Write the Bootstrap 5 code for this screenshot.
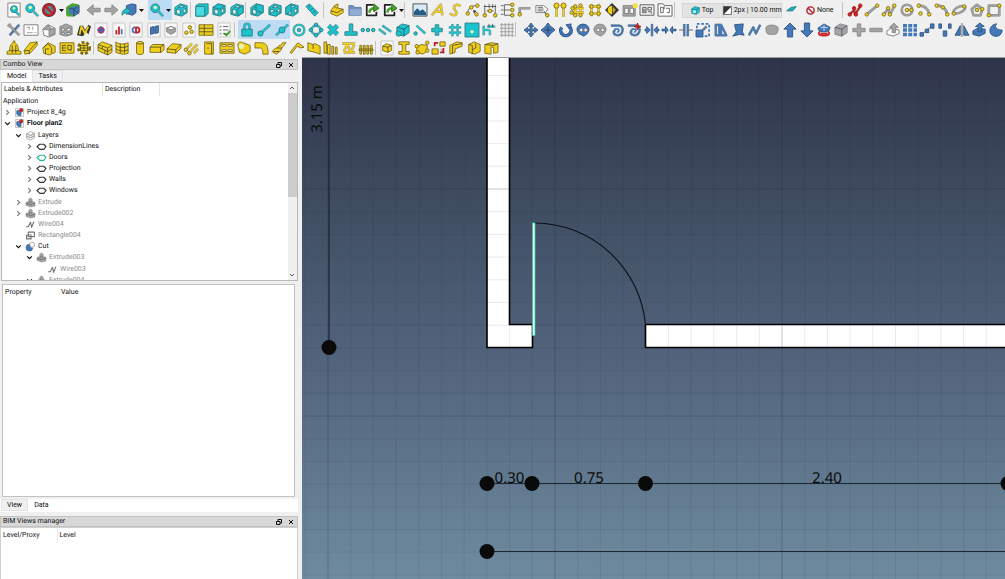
<!DOCTYPE html>
<html lang="en">
<head>
<meta charset="utf-8">
<meta name="viewport" content="width=device-width, initial-scale=1">
<title>FreeCAD - Floor plan2</title>
<link href="https://cdn.jsdelivr.net/npm/bootstrap@5.3.0/dist/css/bootstrap.min.css" rel="stylesheet">
<style>
  body { font-family: Roboto, "Open Sans", sans-serif; font-size: 7px; line-height: 11px; color: #111; background: #f0f0f0; text-rendering: geometricPrecision; }
  button { font: inherit; color: inherit; background: none; border: 0; padding: 0; }
  /* toolbars */
  .bar-row { height: 20px; }
  .bar-row:nth-child(2) { height: 19px; }
  .bar-row:nth-child(3) { height: 18px; }
  .tool-set > *, .bar-row > * { min-width: 0; }
  .tool { flex: 1 1 0; min-width: 0; height: 100%; display: flex; align-items: center; justify-content: center; }
  .tool:hover, .tool.active { background: #bcdcf4; }
  .split-line { border-left: 1px solid #c4c4c4; margin: 2px 0; width: 1px; }
  .wide { background: #e3e3e3; border: 1px solid #d6d6d6; height: 15px; white-space: nowrap; }
  .tool-gap { gap: 2px; }
  .ico { width: 14px; height: 14px; flex: none; overflow: visible; stroke-linejoin: round; }
  .ico-s { width: 9px; height: 9px; flex: none; stroke-linejoin: round; overflow: visible; }
  .ft { fill: #1cc3cd; stroke: #2a7d84; } .fy { fill: #efcf1c; stroke: #7d6a17; }
  .fb { fill: #4379b8; stroke: #2f5484; } .fg { fill: #a4a4a4; stroke: #858585; }
  .fw { fill: #fbfbfb; stroke: #777; } .fr { fill: #dc2020; stroke: #9c1a1a; }
  .fk { fill: #333; } .fd { fill: #e8f7b8; }
  .edge, .lt, .ly, .lb, .lg, .lk, .lr, .lgreen { fill: none; }
  .edge { stroke: #333; stroke-width: 3; opacity: .5; }
  .lt { stroke: #1cc3cd; stroke-width: 2; } .ly { stroke: #efcf1c; stroke-width: 2; }
  .lb { stroke: #4379b8; stroke-width: 2; } .lg { stroke: #a0a0a0; stroke-width: 2; }
  .lk { stroke: #333; stroke-width: 1; stroke-opacity: .8; } .lr { stroke: #c81c24; stroke-width: 2; }
  .lgreen { stroke: #4aa52c; stroke-width: 3; }
  /* docked panels */
  .dock { flex: 0 0 30%; min-width: 0; padding: 2px 4px 0 0; }
  .dock-title { background: #d8d8d8; border: 1px solid #c2c2c2; height: 11px; line-height: 9px; padding: 0 2px; }
  .dock-title h2 { font-size: 7px; line-height: 9px; font-weight: 400; margin: 0; }
  .dock-title button { width: 8px; height: 9px; display: flex; align-items: center; justify-content: center; }
  .dock-title svg { width: 6px; height: 6px; }
  .dock-title .lk { stroke: #111; stroke-opacity: 1; }
  .dock-tabs { border: 0; padding-left: 1px; --bs-nav-tabs-border-width: 0; flex-wrap: nowrap; }
  .dock-tabs .nav-link { font-size: 7px; line-height: 10px; padding: 0 5px; color: #111; border: 1px solid #e4e4e4; border-radius: 0; margin: 0; background: #f0f0f0; }
  .dock-tabs .nav-link.active { background: #fff; color: #111; border-color: #fff; }
  .low-tabs { margin-top: 2px; padding-bottom: 1px; }
  .tree-box { height: 199px; border: 1px solid #b8b8b8; background: #fff; margin: 0 0 0 1px; }
  .tree-head { height: 13px; line-height: 13px; }
  .tree-head span { padding-left: 2px; border-right: 1px solid #e4e4e4; }
  .tree-head span:nth-child(1) { width: 101px; } .tree-head span:nth-child(2) { width: 57px; }
  .tree { height: 190px; margin: 0; padding: 0; list-style: none; }
  .tree li { flex: 1 1 0; min-height: 0; display: flex; align-items: center; white-space: nowrap; }
  .tree .fold { width: 9px; height: 9px; display: flex; align-items: center; justify-content: center; margin-right: 3px; }
  .tree .fold svg { width: 7px; height: 7px; }
  .tree .ico-s { margin-right: 3px; }
  .lv0 { padding-left: 1px; } .lv1 { padding-left: 12px; } .lv2 { padding-left: 23px; } .lv3 { padding-left: 34px; }
  .dim { color: #8b8b8b; }
  .scroll-bar { width: 9px; background: #f0f0f0; }
  .scroll-bar svg { width: 6px; height: 10px; margin: 0 auto; }
  .thumb { height: 104px; background: #cdcdcd; }
  .prop-box { background: #fff; border: 1px solid #c2c2c2; margin: 3px 3px 0 2px; }
  .head-tbl { border-collapse: collapse; }
  .head-tbl th { font-weight: 400; height: 15px; padding: 0 2px; }
  .prop-box th:first-child { width: 56px; }
  .views-box { background: #fff; border: 1px solid #d0d0d0; border-bottom: 0; height: 52px; }
  .views-box th:first-child { width: 56px; border-right: 1px solid #e8e8e8; }
  /* 3D view */
  .view3d { min-width: 0; background: linear-gradient(#2e3449 0%, #455569 37%, #50617a 55%, #5d7389 75%, #6e8ba0 100%); border-top: 1px solid #9a9a9a; }
  .view3d text { font-family: "Noto Sans", "Open Sans", sans-serif; font-size: 15px; fill: #0a0a0a; text-anchor: middle; }
</style>
</head>
<body class="vh-100 d-flex flex-column overflow-hidden">
<header id="bars">
  <div class="bar-row d-flex align-items-center" role="toolbar" aria-label="View"></div>
  <div class="bar-row d-flex align-items-center" role="toolbar" aria-label="Snap and modify"></div>
  <div class="bar-row d-flex align-items-center" role="toolbar" aria-label="Building"></div>
</header>

<main class="d-flex flex-grow-1 overflow-hidden">
  <aside class="dock d-flex flex-column">
    <section class="d-flex flex-column flex-grow-1">
      <div class="dock-title d-flex align-items-center">
        <h2 class="flex-grow-1">Combo View</h2>
        <div class="d-flex gap-1">
          <button aria-label="Float"><svg viewBox="0 0 6 6"><path class="lk" d="M2 2V.5h3.5V4H4M.5 2.5H4v3H.5z"/></svg></button>
          <button aria-label="Close"><svg viewBox="0 0 6 6"><path class="lk" d="M1 1l4 4M5 1L1 5"/></svg></button>
        </div>
      </div>
      <div class="nav nav-tabs dock-tabs" role="tablist">
        <button class="nav-link active" role="tab">Model</button>
        <button class="nav-link" role="tab">Tasks</button>
      </div>
      <div class="tree-box d-flex">
        <div class="flex-grow-1 overflow-hidden">
          <div class="tree-head d-flex"><span>Labels &amp; Attributes</span><span>Description</span></div>
          <ul class="tree d-flex flex-column" id="tree"></ul>
        </div>
        <div class="scroll-bar d-flex flex-column">
          <svg viewBox="0 0 6 10"><path class="lk" d="M1 6l2-2 2 2"/></svg>
          <div class="thumb"></div>
          <svg class="mt-auto" viewBox="0 0 6 10"><path class="lk" d="M1 4l2 2 2-2"/></svg>
        </div>
      </div>
      <div class="prop-box flex-grow-1">
        <table class="head-tbl"><thead><tr><th>Property</th><th>Value</th></tr></thead></table>
      </div>
      <div class="bg-white low-tabs">
        <div class="nav nav-tabs dock-tabs" role="tablist">
          <button class="nav-link" role="tab">View</button>
          <button class="nav-link active" role="tab">Data</button>
        </div>
      </div>
    </section>
    <section class="mt-1">
      <div class="dock-title d-flex align-items-center">
        <h2 class="flex-grow-1">BIM Views manager</h2>
        <div class="d-flex gap-1">
          <button aria-label="Float"><svg viewBox="0 0 6 6"><path class="lk" d="M2 2V.5h3.5V4H4M.5 2.5H4v3H.5z"/></svg></button>
          <button aria-label="Close"><svg viewBox="0 0 6 6"><path class="lk" d="M1 1l4 4M5 1L1 5"/></svg></button>
        </div>
      </div>
      <div class="views-box">
        <table class="head-tbl"><thead><tr><th>Level/Proxy</th><th>Level</th></tr></thead></table>
      </div>
    </section>
  </aside>

  <section class="view3d flex-grow-1 overflow-hidden" aria-label="3D view">
    <svg class="d-block w-100 h-100" id="plan">
      <line x1="27" x2="27" y1="0" y2="290" stroke="#1c2231" stroke-opacity=".8" stroke-width="1.5"/>
      <g fill="#fff" stroke="#000" stroke-width="1.6">
        <path d="M185-5V289.500H230.500V266.500H207.500V-5z"/>
        <path d="M3000 266.500H343.500V289.500H3000z"/>
      </g>
      <g id="grid"></g>
      <path d="M233 165A112 112 0 0 1 343.500 267" fill="none" stroke="#0d1017" stroke-width="1.1"/>
      <rect x="230.500" y="165" width="2.500" height="112.500" fill="#e9fffa" stroke="#2fc5a4" stroke-width=".8"/>
      <path d="M185 425.500H703M185 493.500H3000" stroke="#1b2731" stroke-width="1.1"/>
      <g fill="#0a0a0a">
        <circle cx="27" cy="289.500" r="7.500"/><circle cx="185" cy="425.500" r="7.500"/><circle cx="230" cy="425.500" r="7.500"/>
        <circle cx="343.500" cy="425.500" r="7.500"/><circle cx="706" cy="425.500" r="7.500"/><circle cx="185" cy="493.500" r="7.500"/>
      </g>
      <text x="207.500" y="425">0.30</text>
      <text x="287" y="425">0.75</text>
      <text x="525" y="425">2.40</text>
      <text transform="translate(20 51) rotate(-90)">3.15 m</text>
    </svg>
  </section>
</main>

<script src="https://cdn.jsdelivr.net/npm/bootstrap@5.3.0/dist/js/bootstrap.bundle.min.js"></script>
<script>
const p = (c, d) => `<path class="${c}" d="${d}"/>`;
const o = (c, x, y, r) => `<circle class="${c}" cx="${x}" cy="${y}" r="${r}"/>`;
const s = (c, d) => p('edge', d) + p(c, d);          // outlined stroke
const dots = (c, ...a) => a.map(([x, y]) => o(c, x, y, 2)).join('');
const cube = c => p(c, 'M1 5l6-4 8 2v8l-6 4-8-2z') + `<path d="M1 5l8 2 6-4M9 7v8" fill="none" stroke="#123" stroke-opacity=".6"/>`;
const wire = f => p('ft', 'M1 5l6-4 8 2v8l-6 4-8-2z') + `<path fill="#e6f7f7" stroke="#2a7d84" d="M3 7l4 1v5l-4-1zM10.500 8l3-2v4l-3 2zM5 5l3-2 4 1-3 1.500z"/>` + (f ? p('ft', f) : '');
const sheet = x => `<path fill="#f8f8f8" stroke="#c4c4c4" d="M1 0h14v16H1z"/>` + x;
const frame = x => `<path fill="#eee" stroke="#555" d="M0 2h16v12H0z"/>` + x;
const glass = c => s('lt', 'M10 10l5 5') + o(c, 6, 6, 5) + o('fd', 6, 5, 2);

const icons = {
  fitAll: `<path fill="#fff" stroke="#777" d="M1 0h14v16H1z"/>` + s('lt', 'M10 10l4 4') + o('ft', 8, 7, 4) + o('fd', 8, 6, 1.5),
  fitSel: glass('ft'),
  noDraw: `<circle cx="8" cy="8" r="7" fill="#4b8f94" stroke="#3a3a3a" stroke-width="2"/>` + `<circle cx="8" cy="8" r="6" fill="none" stroke="#c81c24" stroke-width="2.500"/><path d="M4 4l8 8" stroke="#c81c24" stroke-width="2.500"/>`,
  boxSel: cube('fb') + p('lgreen', 'M2 5v9h6M2 5l6-3 6 1') + p('lk', 'M10 8l5 5'),
  back: p('fg', 'M0 8l7-6v4h8v4H7v4z'), fwd: p('fg', 'M16 8L9 2v4H1v4h8v4z'),
  link: p('fb', 'M5 3l6-2 5 1v9l-4 3-7-2z') + p('ft', 'M0 14c0-5 2-7 5-7V5l5 4-5 4v-2c-2 0-3 1-5 3z'),
  glass: glass('ft'), axo: wire(''), front: wire('M1 5l8 2v8l-8-2z'),
  front2: `<path class="ft" d="M1 3l3-2h11v11l-3 3H1z"/><path fill="#4adbe2" stroke="#2a7d84" d="M1 4h10v11H1z"/>`,
  top: wire('M1 5l6-4 8 2-6 4z'), right: wire('M9 7l6-4v8l-6 4z'),
  rear: wire('M7 1l8 2v8l-8-2z'), bottom: wire('M1 13l6-4 8 2-6 4z'), left: wire('M1 5l6-4v8l-6 4z'),
  ruler: p('ft', 'M1 4l4-3 10 10-4 4z') + p('lk', 'M6 3L4 5M9 6L7 8M12 9l-2 2'),
  part: p('fy', 'M1 9l4-6 4-2v5l6 1v4l-7 4-7-3z') + p('lk', 'M1 9l7 2 7-4M5 4l3 2'),
  folder: `<path fill="#6f8fbd" stroke="#58749c" d="M1 3h5l2 2h7v9H1z"/><path fill="#8facd2" d="M2 7h13v7H2z"/>`,
  linkOut: `<path fill="#fff" stroke="#222" stroke-width="2" d="M9 2H2v12h11v-4"/>` + p('lgreen', 'M5 11c0-4 2-5 6-5') + `<path fill="#4aa52c" stroke="#265f12" d="M10 1l6 5-6 4z"/>`,
  image: `<path fill="#d8eaf5" stroke="#444" d="M0 1h16v14H0z"/><path fill="#285d85" d="M1 10l4-4 3 3 3-2 4 4v3H1z"/>`,
  textA: s('ly', 'M1 14L11 2l2 12M5 10h7'), textS: s('ly', 'M14 4C11 0 4 3 8 8s0 8-6 4'),
  dimA: p('lk', 'M2 12C2 6 6 3 12 3') + dots('fy', [2, 12], [6, 5], [13, 3], [12, 13]) + p('fk', 'M8 8l4 1-3 3z'),
  dimB: p('lk', 'M1 4h14M2 2v12M14 2v12M4 9h8M7 1v5M11 1v5') + dots('fy', [2, 14], [14, 14], [8, 9]),
  dimC: p('lk', 'M5 2v12M5 2h8M5 8h8M5 14h8M1 3h3M1 8h3M1 13h3') + dots('fy', [14, 2], [14, 8], [14, 14]),
  leader: s('lg', 'M2 13V6h12') + dots('fy', [2, 13]),
  tag: p('fw', 'M1 3h9l5 4-3 4H1z') + p('lk', 'M3 5h6M3 7h7M3 9h6M10 9l4 6') + dots('fy', [14, 14]),
  axis: s('ly', 'M4 5v11M12 5v11') + `<circle class="fy" cx="4" cy="3" r="3"/><circle class="fy" cx="12" cy="3" r="3"/>`,
  axes: s('ly', 'M2 6h14M2 11h14M6 2v13M12 1v14') + dots('fy', [2, 11], [6, 4], [12, 3], [3, 6], [6, 14], [12, 14]),
  grid: s('ly', 'M1 4h14M1 12h14M4 1v14M12 1v14') + dots('fy', [4, 4], [12, 4], [4, 12], [12, 12]),
  section: p('fk', 'M8 0l8 8-8 8-8-8z') + `<path fill="#efcf1c" d="M8 3v10a5 5 0 0 1 0-10z"/>` + p('fy', 'M9 4l3 4-3 4z'),
  pageNew: p('fg', 'M0 3h14v12H0z') + p('fw', 'M2 6h4v6H2zM8 6h4v6H8z') + `<circle cx="14" cy="3" r="3" fill="#f4e04a"/>`,
  pageA: frame(p('lk', 'M3 5h4v6H3zM9 5h4v3H9zM9 10h4v2') + p('fg', 'M4 7h2v3H4z')), pageB: `<path fill="#fff" stroke="#555" d="M0 1h6l2 2h8v12H0z"/>` + p('lk', 'M3 5h3v6H3zM9 6h4v5h-3M7 3v4'),
  plane: `<path fill="#1cb0ba" stroke="#2a7d84" d="M3 9l5-4 6-1-4 5z"/>`,
  topv: cube('ft') + `<path fill="#e6ffff" d="M4 8h5v4H4z"/>`, bw: `<path fill="#fff" stroke="#111" d="M1 1h14v14H1z"/>` + p('fk', 'M1 1h14L1 15z'),
  none: `<circle cx="8" cy="8" r="6.500" fill="#fff" stroke="#b01c22" stroke-width="2.500"/><path d="M4 4l8 8" stroke="#b01c22" stroke-width="2.500"/>`,
  sketch: s('lr', 'M2 13l5-5 1 5 6-9') + dots('fr', [2, 13], [7, 6], [9, 13], [14, 3]),
  line: s('lg', 'M2 13L14 3') + dots('fy', [2, 13], [14, 3]),
  poly: s('lg', 'M2 13l5-6 2 6 5-9') + dots('fy', [2, 13], [7, 6], [9, 13], [14, 3]),
  circle: `<circle class="edge" cx="8" cy="8" r="6"/><circle class="lg" cx="8" cy="8" r="6"/>` + dots('fy', [8, 8], [13, 8]),
  arc: s('lg', 'M2 3c7 0 11 4 12 10') + dots('fy', [2, 3], [14, 13], [4, 12]),
  arc3: s('lg', 'M2 3c7 0 11 4 12 10') + dots('fy', [2, 3], [9, 5], [14, 13]),
  ellipse: s('lg', 'M2 12C0 7 10 2 14 4s-4 9-12 8z') + dots('fy', [2, 12], [14, 4]),
  polygon: s('lg', 'M8 2l6 5-2 7H4L2 7z') + dots('fy', [8, 8], [14, 7]),
  rect: s('lg', 'M2 3h12v11H2z') + dots('fy', [14, 3], [2, 14]),
  tools: s('lb', 'M3 14L14 2') + s('lg', 'M2 2l12 12M1 4l3-3'),
  setup: `<path fill="#fff" stroke="#777" d="M0 2h16v12H0z"/><path d="M3 5h3M10 4v4M3 11h7M12 11h2M6 4v4" stroke="#999" fill="none"/>`,
  house: p('fw', 'M1 7l6-5 8 4v7l-7 3-6-2z') + p('fg', 'M1 7l6-5 4 5-3 1zM8 8l6-2v7l-6 2z'),
  bldg: p('fg', 'M1 4l7-3 7 3v9l-7 2-7-2z') + p('fw', 'M3 6h3v3H3zM9 6h4v3H9zM3 11h3v2H3zM9 11h4v2H9z'),
  site: p('fk', 'M0 14L3 3h4l2 5 4-6 3 2-3 9-3-4-3 6z') + p('ly', 'M3 13L5 4l4 8 4-8'),
  sh1: sheet(`<circle cx="8" cy="8" r="4" fill="#d8305a"/><path d="M8 4v8M4 8h8" stroke="#3567b0" stroke-width="2"/>`), sh2: sheet(p('lr', 'M5 8v5M8 4v9') + p('lb', 'M11 7v6')),
  sh3: sheet(p('lb', 'M7 5a3 3 0 0 0 0 6') + p('lr', 'M9 5a3 3 0 0 1 0 6M8 4v8')), sh4: sheet(p('fb', 'M4 5l4-1v8l-4 1zM9 4l4-1v8l-4 1z')),
  sh5: sheet(p('fg', 'M3 6l5-2 5 2v4l-5 3-5-3z') + p('fw', 'M3 6l5-2 5 2-5 2z')), sh6: sheet(dots('fy', [5, 11], [9, 5], [11, 10])),
  sheetY: p('fy', 'M0 2h16v12H0z') + p('lk', 'M0 6h16M0 10h16M6 2v12'),
  report: sheet(p('lk', 'M7 4h6M7 8h6M7 12h4') + p('lg', 'M3 4h2M3 8h2M3 12h2') + `<path fill="none" stroke="#3d9a24" stroke-width="2" d="M8 12l3 2 4-5"/>`),
  lock: s('lt', 'M5 7V4a3 3 0 0 1 6 0v3') + p('ft', 'M2 7h12v8H2z'),
  endp: s('lt', 'M4 12L15 2') + o('ft', 4, 12, 3), mid: s('lt', 'M1 14L15 2') + o('ft', 8, 8, 3.5),
  center: `<circle class="edge" cx="8" cy="8" r="6"/><circle class="lt" cx="8" cy="8" r="6"/>` + o('ft', 8, 8, 2),
  angle: `<circle class="edge" cx="8" cy="8" r="5"/><circle class="lt" cx="8" cy="8" r="5"/>` + dots('ft', [8, 2], [2, 8], [14, 8], [8, 14]),
  inter: `<path d="M3 3l10 10M13 3L3 13" stroke="#2a7d84" stroke-width="5"/><path d="M3 3l10 10M13 3L3 13" stroke="#1cc3cd" stroke-width="3.500"/>`,
  perp: `<path class="ft" d="M6 1h4v9h5v4H1v-4h5z"/>`,
  ext: dots('ft', [2, 8], [8, 8], [14, 8]), para: s('lt', 'M1 7l8 6M5 3l10 7'),
  special: cube('ft') + o('ft', 3, 12, 3), near: s('lt', 'M4 3l10 9') + dots('ft', [3, 12]),
  ortho: `<path class="ft" d="M6 2h4v4h4v4h-4v4H6v-4H2V6h4z"/>`,
  gridS: s('lt', 'M5 1v14M11 1v14M1 5h14M1 11h14'), wp: p('ft', 'M0 0h16v16H0z') + o('fd', 8, 10, 2),
  dimS: s('lt', 'M2 3v11M2 8h7M9 8v6M6 4h9') + p('lk', 'M8 1v4M12 1v4'),
  mesh: `<path stroke="#999" fill="none" d="M2 0v16M6 0v16M10 0v16M14 0v16M0 2h16M0 6h16M0 10h16M0 14h16"/>`,
  move: p('fb', 'M8 0l3 4H9v3h3V5l4 3-4 3V9H9v3h2l-3 4-3-4h2V9H4v2L0 8l4-3v2h3V4H5z'),
  copy: p('fb', 'M8 0l3 4 2 1 3 3-4 3-4 5-3-4-5-4 4-3z') + p('lk', 'M8 4v8M4 8h8'),
  rotate: `<path fill="none" stroke="#2f5484" stroke-width="4" d="M3 5a6 6 0 1 0 9-1"/>` + p('lb', 'M3 5a6 6 0 1 0 9-1') + p('fb', 'M14 1l-6 1 4 5z'),
  clone: p('fb', 'M1 8c0-9 14-9 14 0l-2 4-4 3-6-3z') + o('fw', 6, 8, 2) + o('fw', 11, 8, 2),
  clone2: p('fg', 'M1 8c0-9 14-9 14 0l-2 4-4 3-6-3z') + o('fw', 6, 8, 2) + o('fw', 11, 8, 2),
  offset: s('lb', 'M1 3h9c7 0 5 11-1 11-5 0-6-4-3-6') + p('lb', 'M5 7h4c2 0 1 4-1 3'),
  offset2: s('lb', 'M1 3h9c7 0 5 11-1 11-5 0-6-4-3-6') + p('lb', 'M5 7h4c2 0 1 4-1 3') + p('fr', 'M12 0l1 3 3 1-3 1-1 3-1-3-3-1 3-1z'),
  trim: s('lb', 'M8 1v14') + p('fb', 'M6 8L2 4v3H0v2h2v3zM10 8l4-4v3h2v2h-2v3z'), join: p('fb', 'M7 8L4 4v3H0v2h4v3zM9 8l3-4v3h4v2h-4v3z'),
  split: s('lb', 'M6 1v14M10 1v14') + p('lk', 'M0 8h5M11 8h5'),
  scale: p('fb', 'M0 8h8v8H0z') + `<path fill="none" stroke="#3f75b5" stroke-width="2" stroke-dasharray="3 2" d="M1 6V1h14v14h-5"/>` + s('lb', 'M8 8l4-4'),
  stretch: s('lb', 'M2 2v12h4V2zM8 2l6 12H8z'), draft: p('fb', 'M4 2l10-1-1 9 2 4-5-1-8 2 4-5z'), wireN: s('lb', 'M1 14l5-9 3 7 5-10'),
  blob: p('fg', 'M1 5c3-4 11-3 14 0 0 8-2 8-7 8S1 13 1 5z'), up: p('fb', 'M8 0l7 7h-4v9H5V7H1z'), down: p('fb', 'M8 16l7-7h-4V0H5v9H1z'),
  flip: p('fb', 'M1 6l7-5 7 4-2 5H3z') + `<path d="M8 2v7M4 5h8" stroke="#cfe0f2"/><path fill="none" stroke="#c81c24" stroke-width="2" d="M3 10c-6 6 16 6 10 0M4 12h8"/>`,
  gbox: cube('fg'), plus: p('fg', 'M6 1h4v5h5v4h-5v5H6v-5H1V6h5z'), minus: p('fg', 'M1 6h14v4H1z'),
  gext: p('fw', 'M1 9l5-3 9 2v4l-7 3-7-2z') + p('fg', 'M9 0l5 5h-3v6H7V5H4z'),
  array: `<path fill="#4379b8" d="M0 1h4.500v4H0zM6 1h4.500v4H6zM12 1h4v4h-4zM0 6h4.500v4H0zM6 6h4.500v4H6zM12 6h4v4h-4zM0 11h4.500v4H0zM6 11h4.500v4H6zM12 11h4v4h-4z"/>`,
  path: p('lk', 'M2 13L14 3') + p('fb', 'M0 11h4v4H0zM6 7h4v4H6zM12 1h4v5h-4z'), pts: p('fb', 'M1 1h3v5H1zM12 1h3v5h-3zM6 9h4v6H6z'),
  mirror: p('fb', 'M6 3v11H0zM10 3v11h6z') + p('lk', 'M8 0v16'), extr: p('fb', 'M1 9l5-3 9 1v5l-7 3-7-2z') + p('fb', 'M9 0l5 4h-3v6H7V4H4z'),
  moon: p('fb', 'M9 1C5 4 9 8 15 8c0 10-14 9-14 1 0-4 3-8 8-8z'),
  dome: p('fy', 'M0 15v-3l3-1c0-6 2-8 4-9V0h2v2c3 2 4 4 4 9l3 1v3z') + p('lk', 'M3 11h10M6 5v9M10 5v9'),
  slab: p('fy', 'M0 11L7 2l8-1v4l-8 9-6 1z') + p('lk', 'M0 11l6 0 9-10M6 11v4'),
  yhouse: p('fy', 'M1 8l6-6 8 4v7l-7 3-6-2z') + p('lk', 'M1 8l6-5 4 5v6M4 15V9h4'),
  eq: p('fy', 'M0 2h16v12H0z') + p('lk', 'M3 5h4M3 8h4M3 11h4M3 5v6M9 5h4v5H9zM11 10l2 2'),
  gear: `<circle cx="8" cy="8" r="6" fill="#efcf1c" stroke="#7d6a17" stroke-width="4" stroke-dasharray="3 2"/><circle cx="8" cy="8" r="5" fill="#efcf1c"/>` + p('lk', 'M4 5h8v6H4zM8 5v6M4 8h8'),
  wall: p('fy', 'M0 4l5-3 11 4v8l-5 3L0 11z') + p('lk', 'M0 4l11 4 5-3M0 7l11 5 5-3M11 8v8M5 6v3M8 10v4'),
  curtain: p('fy', 'M1 1c4 3 9 3 14 1v12c-4 2-9 1-14-1z') + p('lk', 'M1 5c4 3 9 3 14 1M1 9c4 3 9 3 14 1M6 3v11M11 3v11'),
  col: p('fy', 'M4 2c1-2 7-2 8 0v12c-1 2-7 2-8 0z') + p('lk', 'M4 2c1 2 7 2 8 0'), beam: p('fy', 'M0 7l3-3h13v6l-3 3H0z') + p('lk', 'M0 7h12l4-3M12 7v6'),
  floor: p('fy', 'M0 9l6-6 10 1v4l-6 6-10-1z') + p('lk', 'M0 9l10 1 6-6M10 10v4'),
  rebar: s('ly', 'M1 10l7-7M5 13l9-9M10 14l5-5') + dots('fy', [1, 10], [5, 14]),
  door: p('fy', 'M3 1h10v14H3z') + p('lk', 'M5 3h6v12M6 8h2'), win: p('fy', 'M0 2h16v12H0z') + `<path fill="#fff" stroke="#7d6a17" d="M2 4h5v2H2zM9 4h5v2H9zM2 10h5v2H2zM9 10h5v2H9z"/>`,
  pipe: p('fy', 'M1 5c0-5 4-4 6-3l8 3v7l-6 3-6-2z') + o('fd', 5, 6, 3),
  elbow: p('fy', 'M0 2h7c6 0 8 4 8 13H9c0-5-1-7-3-7H0z'),
  stairs: p('fy', 'M0 12l4-4h2l2-3h2l2-3h4l-5 6-1 3-5 4z') + p('lk', 'M2 12h6M6 8h6'), roof: p('fy', 'M0 13L9 2l7 5-4 1-4-2-6 8z'),
  panel: p('fy', 'M1 2l6 2 2-1 6 3v9l-6-2-8-2z') + p('lk', 'M7 4v5'), frameY: p('fy', 'M0 1h3v13H0zM4 4h3v11H4zM9 6h2v9H9zM13 7h2v8h-2z'),
  truss: s('ly', 'M0 3h15M2 13h13M2 12l4-8 4 9 4-9'), fence: p('fy', 'M1 5h2v10H1zM5 5h2v10H5zM9 5h2v10H9zM13 5h2v10h-2zM0 9h16v2H0z'),
  boxS: sheet(p('fy', 'M3 6l4-3 6 2v6l-4 2-6-2z') + p('lk', 'M3 6l6 1 4-2M9 7v6')), ibeam: p('fy', 'M2 1h12v3h-4v8h4v3H2v-3h4V4H2z'),
  parts: p('fy', 'M2 7l5-3 7 1v6l-5 4-7-2z') + dots('fy', [2, 6], [14, 2], [3, 13], [14, 11]), swap: p('fy', 'M0 9h7v6H0zM9 1h6v5H9z') + p('lr', 'M3 6V2h4M13 8v5H9') + p('lk', 'M10 9l4 5'),
  prof: p('fy', 'M1 5l8-4 6 1v4l-8 3v4l-6 2z') + p('lk', 'M4 5l11-2M4 5v9'), door3: p('fy', 'M2 4l6-3 7 3v8l-6 3-7-2z') + p('lk', 'M2 4l4 1v5l4-2V3M6 10v5'),
  open: p('fy', 'M1 4l7-2 8 1v10l-5 1V7H8v8l-7-1z') + p('lk', 'M1 4l10 1 5-2')
};

const svg = (n, c = 'ico') => `<svg class="${c}" viewBox="0 0 16 16" aria-hidden="true">${icons[n]}</svg>`;
const caret = `<svg class="ico-s" viewBox="0 0 9 9" aria-hidden="true"><path d="M2 3h5L4.500 6z" fill="#111"/></svg>`;
/* every entry: [share of the row, icon names | '' for a gap | '|' for a separator] */
const rows = [
  [[5, ''], [53, 'fitAll fitSel noDraw'], [6, 'v'], [18, 'boxSel'], [3, ''], [35, 'back fwd'], [18, 'link'], [6, 'v'], [4, ''],
   [17, '*glass'], [7, '*v'], [18, 'axo'], [3, '|'], [52, 'front2 top right'], [3, '|'], [53, 'rear bottom left'], [2, ''], [18, 'ruler'], [2, ''], [5, '|'],
   [70, 'part folder linkOut linkOut'], [6, 'v'], [7, '|'], [262, 'image textA textS dimA dimB dimC leader tag axis axes grid section pageNew pageA pageB'],
   [8, '|'], [41, '=topv Top'], [59, '=bw 2px | 10.00 mm'], [18, 'plane'], [40, '-none None'], [2, ''], [4, '|'], [157, 'sketch line poly circle arc arc3 ellipse polygon rect'], [2, '']],
  [[5, ''], [228, 'tools setup house bldg site sh1 sh2 sh3 sh4 sh5 sh6 sheetY report'], [2, ''], [4, '|'], [52, '*lock *endp *mid'],
   [226, 'center angle inter perp ext para special near ortho gridS wp dimS mesh'], [7, '|'],
   [484, 'move copy rotate clone clone2 offset offset2 trim join split scale stretch draft wireN blob up down flip gbox plus minus gext array path pts mirror extr moon']],
  [[5, ''], [88, 'dome slab yhouse eq gear'], [3, '|'], [279, 'wall curtain col beam floor rebar door win pipe elbow stairs roof panel frameY truss fence'],
   [3, '|'], [122, 'boxS ibeam parts swap prof door3 open'], [505, '']]
];
const grow = (n, cls, body) => `<div class="${cls}" style="flex:${n} 1 0">${body}</div>`;
document.querySelectorAll('#bars .bar-row').forEach((row, i) => {
  row.innerHTML = rows[i].map(([n, what]) => {
    if (!what) return grow(n, '', '');
    if (what === '|') return grow(n, 'h-100 d-flex', '<span class="split-line"></span>');
    if (/^[=-]/.test(what)) {
      const [icon, ...label] = what.slice(1).split(' ');
      const cls = what[0] === '=' ? 'wide' : 'text-nowrap';
      return grow(n, 'd-flex', `<button class="${cls} tool-gap w-100 d-flex align-items-center justify-content-center">${svg(icon, 'ico-s')}<span>${label.join(' ')}</span></button>`);
    }
    return grow(n, 'tool-set d-flex h-100', what.split(' ').map(t => {
      const on = t[0] === '*', name = on ? t.slice(1) : t;
      return `<button class="tool${on ? ' active' : ''}" aria-label="${name === 'v' ? 'more' : name}">${name === 'v' ? caret : svg(name)}</button>`;
    }).join(''));
  }).join('');
});

/* model tree: [level, fold state, icon, label, class] */
const layer = c => `<path fill="#fff" stroke="${c}" stroke-width="2" d="M0 8l5-4h7l4 4-4 5H5z"/>`;
Object.assign(icons, {
  doc: `<path fill="#f5f5f5" stroke="#999" d="M1 1h14v14H1z"/>` + p('fb', 'M3 5l5-1 3 4-1 6-5-1-2-3z') + o('fr', 11, 4, 3),
  layers: p('fw', 'M1 5l7-4 7 3v8l-7 4-7-3z') + p('lg', 'M1 5l7 3 7-4M1 9l7 3 7-4'),
  layK: layer('#333'), layT: layer('#25b596'),
  ext2: p('fg', 'M0 8l5-2V2l3-2 3 2v4l5 2v6l-8 2-8-3z') + p('lk', 'M5 6l3 2 3-2M0 9l8 3 8-3'),
  wire2: `<path fill="none" stroke="#777" stroke-width="2" d="M0 12h4l4-8 2 9 4-10"/>`,
  rect2: `<path fill="none" stroke="#777" stroke-width="2" d="M4 2h11v8H4zM1 7h8v7H1z"/>`,
  cut: o('fw', 11, 5, 4.5) + p('fb', 'M6 4a6 6 0 1 0 6 7 6 6 0 0 1-6-7z')
});
const nodes = [
  [0, '>', 'doc', 'Project 8_4g', ''], [0, 'v', 'doc', 'Floor plan2', 'fw-bold'], [1, 'v', 'layers', 'Layers', ''],
  [2, '>', 'layK', 'DimensionLines', ''], [2, '>', 'layT', 'Doors', ''], [2, '>', 'layK', 'Projection', ''], [2, '>', 'layK', 'Walls', ''],
  [2, '>', 'layK', 'Windows', ''], [1, '>', 'ext2', 'Extrude', 'dim'], [1, '>', 'ext2', 'Extrude002', 'dim'], [1, '', 'wire2', 'Wire004', 'dim'],
  [1, '', 'rect2', 'Rectangle004', 'dim'], [1, 'v', 'cut', 'Cut', ''], [2, 'v', 'ext2', 'Extrude003', 'dim'], [3, '', 'wire2', 'Wire003', 'dim'],
  [2, 'v', 'ext2', 'Extrude004', 'dim']
];
const folds = { '>': 'M2 1l2 2-2 2', 'v': 'M1 2l2 2 2-2' };
document.getElementById('tree').innerHTML = '<li class="lv0"><span>Application</span></li>' + nodes.map(([lv, f, icon, label, cls]) =>
  `<li class="lv${lv}">` + (f ? `<button class="fold" aria-label="Toggle ${label}"><svg viewBox="0 0 6 6"><path d="${folds[f]}" fill="none" stroke="${f === 'v' ? '#111' : '#777'}"/></svg></button>` : '<span class="fold"></span>') +
  svg(icon, 'ico-s') + `<span class="${cls}">${label}</span></li>`).join('');

/* drawing grid: ten minor cells to a major one */
const step = 227 / 10, lines = [];
for (let i = -11; i < 120; i++) {
  const x = 253 + i * step, y = 131 + i * step, major = i % 10 === 0;
  lines.push(`<path d="M${x} 0V3000M0 ${y}H3000" stroke="#1e2440" stroke-opacity="${major ? .26 : .09}"/>`);
}
document.getElementById('grid').innerHTML = lines.join('');
</script>
</body>
</html>
